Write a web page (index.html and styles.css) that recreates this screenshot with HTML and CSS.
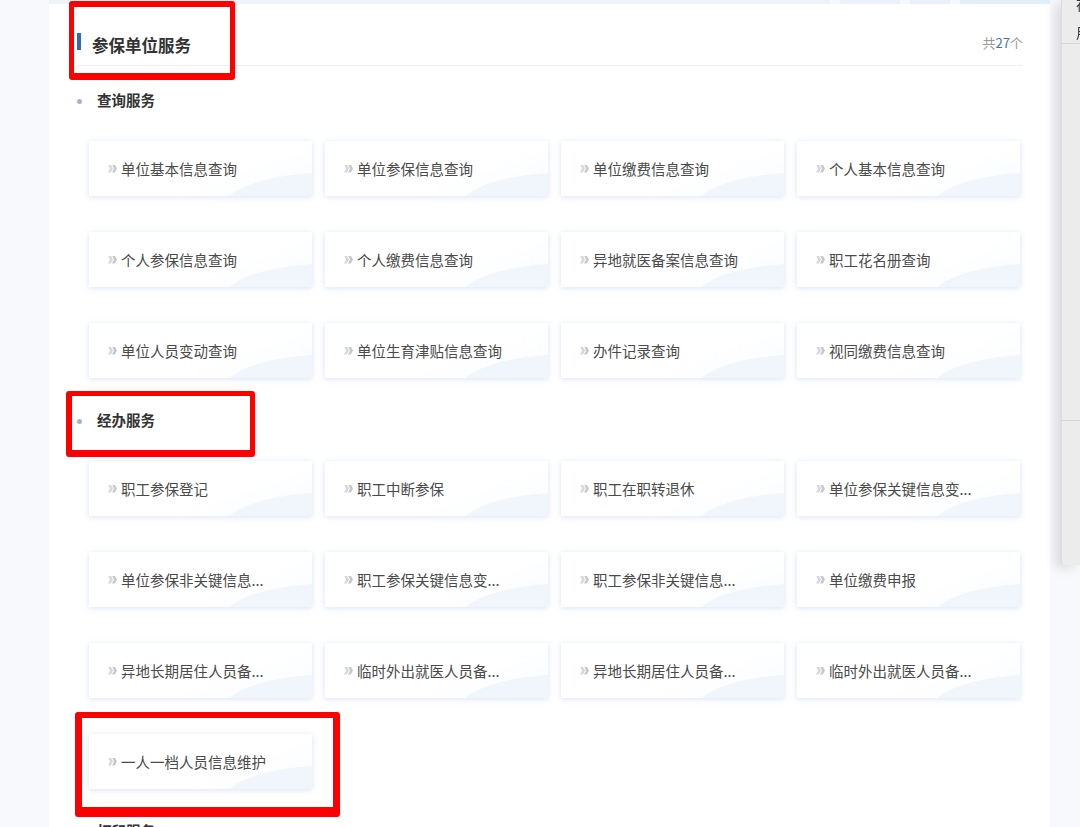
FILE: index.html
```html
<!DOCTYPE html>
<html lang="zh-CN">
<head>
    <meta charset="UTF-8">
    <meta name="viewport" content="width=device-width, initial-scale=1.0">
    <title>参保单位服务</title>
    <link rel="stylesheet" href="styles.css">
</head>
<body>
<div class="page">

    <div class="panel">
        <div class="tabs-strip"></div>

        <div class="panel-head">
            <h2 class="panel-title">参保单位服务</h2>
            <span class="panel-count">共<em>27</em>个</span>
        </div>

        <!-- 查询服务 -->
        <div class="group">
            <h3 class="group-title">查询服务</h3>
            <ul class="service-list">
                <li class="service-item"><i class="arrow"></i>单位基本信息查询</li>
                <li class="service-item"><i class="arrow"></i>单位参保信息查询</li>
                <li class="service-item"><i class="arrow"></i>单位缴费信息查询</li>
                <li class="service-item"><i class="arrow"></i>个人基本信息查询</li>
                <li class="service-item"><i class="arrow"></i>个人参保信息查询</li>
                <li class="service-item"><i class="arrow"></i>个人缴费信息查询</li>
                <li class="service-item"><i class="arrow"></i>异地就医备案信息查询</li>
                <li class="service-item"><i class="arrow"></i>职工花名册查询</li>
                <li class="service-item"><i class="arrow"></i>单位人员变动查询</li>
                <li class="service-item"><i class="arrow"></i>单位生育津贴信息查询</li>
                <li class="service-item"><i class="arrow"></i>办件记录查询</li>
                <li class="service-item"><i class="arrow"></i>视同缴费信息查询</li>
            </ul>
        </div>

        <!-- 经办服务 -->
        <div class="group">
            <h3 class="group-title">经办服务</h3>
            <ul class="service-list">
                <li class="service-item"><i class="arrow"></i>职工参保登记</li>
                <li class="service-item"><i class="arrow"></i>职工中断参保</li>
                <li class="service-item"><i class="arrow"></i>职工在职转退休</li>
                <li class="service-item"><i class="arrow"></i>单位参保关键信息变...</li>
                <li class="service-item"><i class="arrow"></i>单位参保非关键信息...</li>
                <li class="service-item"><i class="arrow"></i>职工参保关键信息变...</li>
                <li class="service-item"><i class="arrow"></i>职工参保非关键信息...</li>
                <li class="service-item"><i class="arrow"></i>单位缴费申报</li>
                <li class="service-item"><i class="arrow"></i>异地长期居住人员备...</li>
                <li class="service-item"><i class="arrow"></i>临时外出就医人员备...</li>
                <li class="service-item"><i class="arrow"></i>异地长期居住人员备...</li>
                <li class="service-item"><i class="arrow"></i>临时外出就医人员备...</li>
                <li class="service-item"><i class="arrow"></i>一人一档人员信息维护</li>
            </ul>
        </div>

        <!-- 打印服务 -->
        <div class="group">
            <h3 class="group-title">打印服务</h3>
            <ul class="service-list">
                <li class="service-item"><i class="arrow"></i>参保证明打印</li>
                <li class="service-item"><i class="arrow"></i>缴费明细打印</li>
            </ul>
        </div>
    </div>

    <!-- 标注框 -->
    <div class="mark mark-title"></div>
    <div class="mark mark-group"></div>
    <div class="mark mark-item"></div>

    <!-- 右侧浮层 -->
    <aside class="drawer">
        <div class="drawer-head">
            <p>在线咨询</p>
            <p>用户中心</p>
        </div>
        <div class="drawer-body">
            <p>（常见问题）</p>
        </div>
    </aside>

</div>
</body>
</html>
```

FILE: styles.css
```css
/* Style général */
body {
    margin: 0;
    background-color: #f7f9fc;
    font-family: "Noto Sans CJK SC", "Noto Sans", sans-serif;
    color: #333;
    overflow: hidden;
}

.page {
    position: relative;
    padding-left: 49px;
    width: 1001px;
}

/* Panneau blanc */
.panel {
    background: #fff;
    padding: 0 27px 40px;
    min-height: 100vh;
}

.tabs-strip {
    height: 4px;
    margin: 0 -27px;
    background: linear-gradient(to right,
        #eff3f8 0 78%, #f5f8fc 78% 79%, #eaf1f9 79% 85%,
        #f5f8fc 85% 86%, #e8f0f9 86% 90%, #f5f8fc 90% 91%, #e4eef9 91% 100%);
}

/* En-tête */
.panel-head {
    display: flex;
    justify-content: space-between;
    align-items: center;
    height: 24px;
    padding: 29px 0 8px;
    line-height: 24px;
    border-bottom: 1px solid #edf1f7;
}
.panel-title {
    position: relative;
    margin: 0;
    padding-left: 16px;
    font-size: 16.5px;
    font-weight: bold;
    color: #333;
}
.panel-title::before {
    content: "";
    position: absolute;
    left: 1px;
    top: 0;
    width: 4px;
    height: 17px;
    background-color: #3567b5;
}
.panel-count {
    position: relative;
    top: -2px;
    font-size: 13px;
    color: #999;
}
.panel-count em {
    font-style: normal;
    color: #3f72c0;
}

/* Groupes */
.group {
    margin-top: 31px;
}
.panel-head + .group {
    margin-top: 23px;
}
.group-title {
    position: relative;
    margin: 0 0 30px;
    padding-left: 21px;
    font-size: 14.5px;
    font-weight: bold;
    line-height: 22px;
    color: #333;
}
.group-title::before {
    content: "";
    position: absolute;
    left: 1px;
    top: 10px;
    width: 5px;
    height: 5px;
    border-radius: 50%;
    background-color: #9db5da;
}

/* Cartes */
.service-list {
    list-style: none;
    margin: 0 3px 0 13px;
    padding: 0;
    display: grid;
    grid-template-columns: repeat(4, 223px);
    column-gap: 13px;
    row-gap: 36px;
}
.service-item {
    display: flex;
    align-items: center;
    height: 55px;
    padding-left: 19px;
    font-size: 14.5px;
    color: #4a4a4a;
    white-space: nowrap;
    cursor: pointer;
    background:
        radial-gradient(ellipse 111px 35px at 245px 66px, #f1f6fc 0 98%, transparent 100%),
        linear-gradient(160deg, #ffffff 60%, #f9fbff 100%);
    box-shadow: 0 1px 6px rgba(110, 150, 215, 0.26);
}
.service-item:hover {
    color: #3567b5;
}

.arrow {
    position: relative;
    width: 9px;
    height: 8px;
    margin-right: 4px;
    flex: none;
}
.arrow::before,
.arrow::after {
    content: "";
    position: absolute;
    top: 0;
    left: 0;
    width: 5px;
    height: 8px;
    background-color: #d6d8dd;
    clip-path: polygon(0 0, 55% 0, 100% 50%, 55% 100%, 0 100%, 40% 50%);
}
.arrow::after {
    left: 4px;
    background-color: #c5c8ce;
}

/* Cadres rouges */
.mark {
    position: absolute;
    box-sizing: border-box;
    border: 5px solid #ff0000;
    border-radius: 3px;
    pointer-events: none;
}
.mark-title {
    left: 69px;
    top: 1px;
    width: 166px;
    height: 79px;
    border-width: 6px 5px 7px 5px;
}
.mark-group {
    left: 66px;
    top: 391px;
    width: 189px;
    height: 66px;
    border-width: 5px 5px 7px 6px;
}
.mark-item {
    left: 75px;
    top: 712px;
    width: 265px;
    height: 105px;
    border-width: 6px 7px 10px 7px;
}

/* Panneau latéral */
.drawer {
    position: fixed;
    top: 0;
    right: 0;
    width: 18px;
    height: 565px;
    background-color: #ececec;
    border-left: 1px solid #dcdcdc;
    box-shadow: -6px 3px 12px rgba(0, 0, 0, 0.12);
    overflow: hidden;
    white-space: nowrap;
    font-size: 14px;
    color: #333;
}
.drawer p {
    margin: 0;
    padding-left: 14px;
    line-height: 28px;
}
.drawer-head {
    height: 53px;
    margin-top: -10px;
    border-bottom: 1px solid #d6d6d6;
}
.drawer-body {
    margin-top: 376px;
    padding-top: 10px;
    border-top: 1px solid #d6d6d6;
}
```
